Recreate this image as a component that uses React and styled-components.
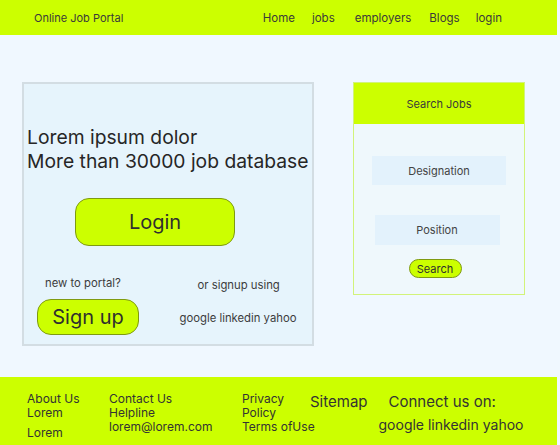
import styled, { createGlobalStyle } from "styled-components";

const GlobalStyle = createGlobalStyle`
  body {
    margin: 0;
    background: #f0f8ff;
    font-family: Inter, "Liberation Sans", sans-serif;
    color: #2a2a2a;
  }
`;

const lime = "#ccff00";

const Page = styled.div`
  width: 557px;
  height: 445px;
  display: flex;
  flex-direction: column;
`;

const Header = styled.header`
  height: 35px;
  background: ${lime};
  display: flex;
  align-items: center;
  padding: 0 0 0 34px;
  font-size: 11px;
  color: #3a3a3a;
`;

const Brand = styled.div`
  flex: 1;
`;

const Nav = styled.nav`
  display: flex;
  align-items: center;
  margin-right: 55px;
  font-size: 11.5px;
`;

const NavLink = styled.span`
  margin-left: ${(p) => p.$gap}px;
`;

const Main = styled.main`
  flex: 1;
  display: flex;
  align-items: flex-start;
  padding: 47px 0 0 22px;
`;

const LoginCard = styled.section`
  width: 288px;
  height: 260px;
  background: #e6f4fc;
  border: 2px solid #d3dde3;
  display: flex;
  flex-direction: column;
`;

const Headline = styled.h1`
  margin: 41px 0 0 3px;
  font-size: 19.3px;
  font-weight: 400;
  line-height: 24px;
  color: #262626;
  white-space: nowrap;
`;

const PillButton = styled.button`
  font-family: inherit;
  background: ${lime};
  border: 1px solid #7f9a10;
  border-radius: 14px;
  color: #2f2f2f;
  font-size: ${(p) => p.$size || 20}px;
  width: ${(p) => p.$w}px;
  height: ${(p) => p.$h}px;
  padding: 0;
  cursor: pointer;
`;

const LoginRow = styled.div`
  margin: 25px 0 0 51px;
`;

const BottomRow = styled.div`
  display: flex;
  margin-top: 30px;
`;

const SignCol = styled.div`
  width: 140px;
  display: flex;
  flex-direction: column;
  align-items: flex-start;
  padding-left: ${(p) => p.$pad || 0}px;
`;

const Small = styled.div`
  font-size: 11.3px;
  color: #3c3c3c;
  line-height: 14px;
  white-space: nowrap;
  margin: ${(p) => p.$m || "0"};
`;

const SearchCard = styled.section`
  width: 170px;
  height: 211px;
  margin-left: 39px;
  border: 1px solid #d2f37a;
  background: #eff8fc;
  display: flex;
  flex-direction: column;
  align-items: center;
`;

const SearchHead = styled.div`
  align-self: stretch;
  height: 41px;
  background: ${lime};
  display: flex;
  align-items: center;
  justify-content: center;
  font-size: 11px;
  color: #3a3a3a;
`;

const Field = styled.div`
  width: ${(p) => p.$w}px;
  height: ${(p) => p.$h}px;
  margin-top: ${(p) => p.$mt}px;
  margin-left: ${(p) => p.$ml || 0}px;
  background: #e3f2fc;
  display: flex;
  align-items: center;
  justify-content: center;
  font-size: 11px;
  color: #444;
`;

const Footer = styled.footer`
  height: 68px;
  background: ${lime};
  display: flex;
  padding: 15px 0 0 27px;
  box-sizing: border-box;
  color: #333;
`;

const FootCol = styled.div`
  width: ${(p) => p.$w}px;
  font-size: 12px;
  line-height: 14px;
  display: flex;
  flex-direction: column;
  white-space: nowrap;
`;

const FootBig = styled.div`
  font-size: 15px;
  line-height: 18px;
  margin-top: 1px;
  white-space: nowrap;
`;

const Connect = styled.div`
  margin-left: 21px;
  display: flex;
  flex-direction: column;
  align-items: flex-start;
`;

const Social = styled.div`
  font-size: 14px;
  margin: 5px 0 0 -10px;
  white-space: nowrap;
`;

export default function App() {
  return (
    <>
      <GlobalStyle />
      <Page>
        <Header>
          <Brand>Online Job Portal</Brand>
          <Nav>
            <NavLink $gap={0}>Home</NavLink>
            <NavLink $gap={17}>jobs</NavLink>
            <NavLink $gap={20}>employers</NavLink>
            <NavLink $gap={18}>Blogs</NavLink>
            <NavLink $gap={16}>login</NavLink>
          </Nav>
        </Header>
        <Main>
          <LoginCard>
            <Headline>
              Lorem ipsum dolor
              <br />
              More than 30000 job database
            </Headline>
            <LoginRow>
              <PillButton $w={160} $h={48}>Login</PillButton>
            </LoginRow>
            <BottomRow>
              <SignCol $pad={13}>
                <Small $m="0 0 0 8px">new to portal?</Small>
                <PillButton $w={102} $h={36} style={{ marginTop: 9 }}>
                  Sign up
                </PillButton>
              </SignCol>
              <SignCol $pad={10}>
                <Small $m="2px 0 0 18px">or signup using</Small>
                <Small $m="19px 0 0 0">google linkedin yahoo</Small>
              </SignCol>
            </BottomRow>
          </LoginCard>
          <SearchCard>
            <SearchHead>Search Jobs</SearchHead>
            <Field $w={134} $h={29} $mt={32} $ml={0}>Designation</Field>
            <Field $w={125} $h={30} $mt={30} $ml={-4}>Position</Field>
            <PillButton
              $w={53}
              $h={19}
              $size={11}
              style={{ marginTop: 14, marginLeft: -8, borderRadius: 10 }}
            >
              Search
            </PillButton>
          </SearchCard>
        </Main>
        <Footer>
          <FootCol $w={82}>
            <span>About Us</span>
            <span>Lorem</span>
            <span style={{ marginTop: 6 }}>Lorem</span>
          </FootCol>
          <FootCol $w={133}>
            <span>Contact Us</span>
            <span>Helpline</span>
            <span>lorem@lorem.com</span>
          </FootCol>
          <FootCol $w={68}>
            <span>Privacy</span>
            <span>Policy</span>
            <span>Terms ofUse</span>
          </FootCol>
          <FootBig>Sitemap</FootBig>
          <Connect>
            <FootBig>Connect us on:</FootBig>
            <Social>google linkedin yahoo</Social>
          </Connect>
        </Footer>
      </Page>
    </>
  );
}
